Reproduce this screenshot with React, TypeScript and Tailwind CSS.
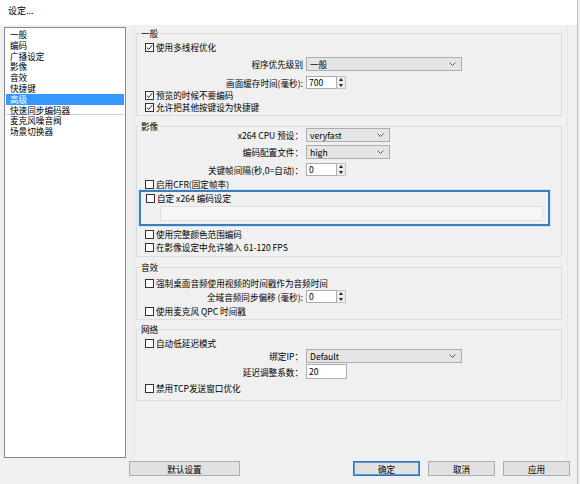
import type { ReactNode } from 'react';

const listItems = ['一般', '编码', '广播设定', '影像', '音效', '快捷键', '高级', '快速同步编码器', '麦克风噪音阀', '场景切换器'];

const Check = ({ checked = false, label, className = '' }: { checked?: boolean; label: string; className?: string }) => (
  <div className={`flex items-center h-[12px] ${className}`}>
    <span className="w-[9px] h-[9px] border border-[#333] bg-white flex items-center justify-center shrink-0">
      {checked && (
        <svg width="7" height="7" viewBox="0 0 7 7">
          <path d="M0.8 3.6 L2.7 5.4 L6.2 1.2" fill="none" stroke="#222" strokeWidth="1" />
        </svg>
      )}
    </span>
    <span className="ml-[2px] leading-[12px] whitespace-nowrap">{label}</span>
  </div>
);

const Chevron = () => (
  <svg width="7" height="4" viewBox="0 0 7 4" className="shrink-0">
    <path d="M0.5 0.5 L3.5 3.5 L6.5 0.5" fill="none" stroke="#555" strokeWidth="1" />
  </svg>
);

const Select = ({ value, width }: { value: string; width: string }) => (
  <div className={`${width} h-[14px] bg-[#e5e5e5] border border-[#adadad] flex items-center justify-between pl-[3px] pr-[5px]`}>
    <span className="leading-[12px]">{value}</span>
    <Chevron />
  </div>
);

const Spin = ({ value }: { value: string }) => (
  <div className="flex h-[13px]">
    <div className="w-[31px] h-full bg-white border border-[#abadb3] pl-[2px] leading-[11px]">{value}</div>
    <div className="w-[9px] h-full border border-l-0 border-[#c4c4c4] bg-[#ececec] flex flex-col items-center justify-around">
      <svg width="4" height="3" viewBox="0 0 4 3"><path d="M0 3 L2 0 L4 3 Z" fill="#222" /></svg>
      <svg width="4" height="3" viewBox="0 0 4 3"><path d="M0 0 L2 3 L4 0 Z" fill="#222" /></svg>
    </div>
  </div>
);

const FormRow = ({ label, children, className = '' }: { label: string; children: ReactNode; className?: string }) => (
  <div className={`flex items-center ${className}`}>
    <span className="w-[158px] text-right mr-[3px] leading-[12px] whitespace-nowrap">{label}</span>
    {children}
  </div>
);

const Group = ({ title, className = '', children }: { title: string; className?: string; children: ReactNode }) => (
  <fieldset className={`w-[426px] border border-[#dcdcdc] ${className}`}>
    <legend className="ml-[3px] px-[1px] leading-[10px]">{title}</legend>
    <div className="flex flex-col pl-[8px]">{children}</div>
  </fieldset>
);

const Button = ({ label, width, primary = false, className = '' }: { label: string; width: string; primary?: boolean; className?: string }) => (
  <button
    className={`${width} h-[15px] bg-[#e1e1e1] flex items-center justify-center leading-[12px] ${
      primary ? 'border border-[#2f73b8] shadow-[inset_0_0_0_1px_#5d9ad4]' : 'border border-[#adadad]'
    } ${className}`}
  >
    {label}
  </button>
);

export default function App() {
  return (
    <div className="w-[580px] h-[484px] bg-[#f0f0f0] overflow-hidden text-[8.6px] text-black font-['Noto_Sans_CJK_SC','Noto_Sans',sans-serif]">
      <div className="w-[578px] h-full border-r border-[#b4c3d3] flex flex-col">
        <div className="h-[25px] bg-white pl-[8px] pt-[5px] leading-[12px] text-[9px]">设定...</div>

        <div className="flex pt-[2px]">
          {/* category list */}
          <ul className="ml-[4px] w-[122px] h-[431px] bg-white border border-[#828790] pt-[1px] px-[1px]">
            {listItems.map((item) => (
              <li
                key={item}
                className={`leading-[10.8px] h-[10.8px] pl-[4px] ${item === '高级' ? 'bg-[#3399ff] text-white' : ''} ${
                  item === '快速同步编码器' ? 'border-b border-[#cfcfcf]' : ''
                }`}
              >
                {item}
              </li>
            ))}
          </ul>

          {/* settings */}
          <div className="ml-[8px] w-[434px] h-[431px] border-x border-[#e6e6e6] pl-[1px] pr-[5px]">
            <Group title="一般" className="mt-[1px]">
              <Check checked label="使用多线程优化" className="mt-[3px]" />
              <FormRow label="程序优先级别" className="mt-[4px] -ml-[8px] pl-[8px]">
                <Select value="一般" width="w-[156px]" />
              </FormRow>
              <FormRow label="画面缓存时间(毫秒):" className="mt-[5px]">
                <Spin value="700" />
              </FormRow>
              <Check checked label="预览的时候不要编码" />
              <Check checked label="允许把其他按键设为快捷键" className="mb-[2px]" />
            </Group>

            <Group title="影像" className="mt-[5px]">
              <FormRow label="x264 CPU 预设：" className="-mt-[3px]">
                <Select value="veryfast" width="w-[84px]" />
              </FormRow>
              <FormRow label="编码配置文件：" className="mt-[3px]">
                <Select value="high" width="w-[84px]" />
              </FormRow>
              <FormRow label="关键帧间隔(秒,0=自动)：" className="mt-[4px]">
                <Spin value="0" />
              </FormRow>
              <Check label="启用CFR(固定帧率)" className="mt-[2px]" />
              <div className="-ml-[6px] w-[411px] border-2 border-[#3d7cbd] shadow-[0_0_0_1px_#cfe3f5] pl-[5px] pr-[5px] pb-[3px]">
                <Check label="自定 x264 编码设定" className="h-[11px]" />
                <div className="mt-[2px] ml-[14px] h-[15px] bg-[#f6f6f6] border border-[#e0e0e0]" />
              </div>
              <Check label="使用完整颜色范围编码" className="mt-[2px]" />
              <Check label="在影像设定中允许输入 61-120 FPS" className="mt-[1px] mb-[3px]" />
            </Group>

            <Group title="音效" className="mt-[5px]">
              <Check label="强制桌面音频使用视频的时间戳作为音频时间" className="mt-[5px]" />
              <FormRow label="全域音频同步偏移 (毫秒):" className="mt-[1px]">
                <Spin value="0" />
              </FormRow>
              <Check label="使用麦克风 QPC 时间戳" className="mt-[2px] mb-[2px]" />
            </Group>

            <Group title="网络" className="mt-[4px]">
              <Check label="自动低延迟模式" className="mt-[3px]" />
              <FormRow label="绑定IP：">
                <Select value="Default" width="w-[156px]" />
              </FormRow>
              <FormRow label="延迟调整系数：" className="mt-[1px]">
                <div className="w-[41px] h-[15px] bg-white border border-[#abadb3] pl-[2px] leading-[13px]">20</div>
              </FormRow>
              <Check label="禁用TCP发送窗口优化" className="mt-[3px] mb-[6px]" />
            </Group>
          </div>
        </div>

        <div className="flex mt-[3px]">
          <Button label="默认设置" width="w-[111px]" className="ml-[129px]" />
          <Button label="确定" width="w-[67px]" primary className="ml-[113px]" />
          <Button label="取消" width="w-[67px]" className="ml-[8px]" />
          <Button label="应用" width="w-[67px]" className="ml-[8px]" />
        </div>
      </div>
    </div>
  );
}
